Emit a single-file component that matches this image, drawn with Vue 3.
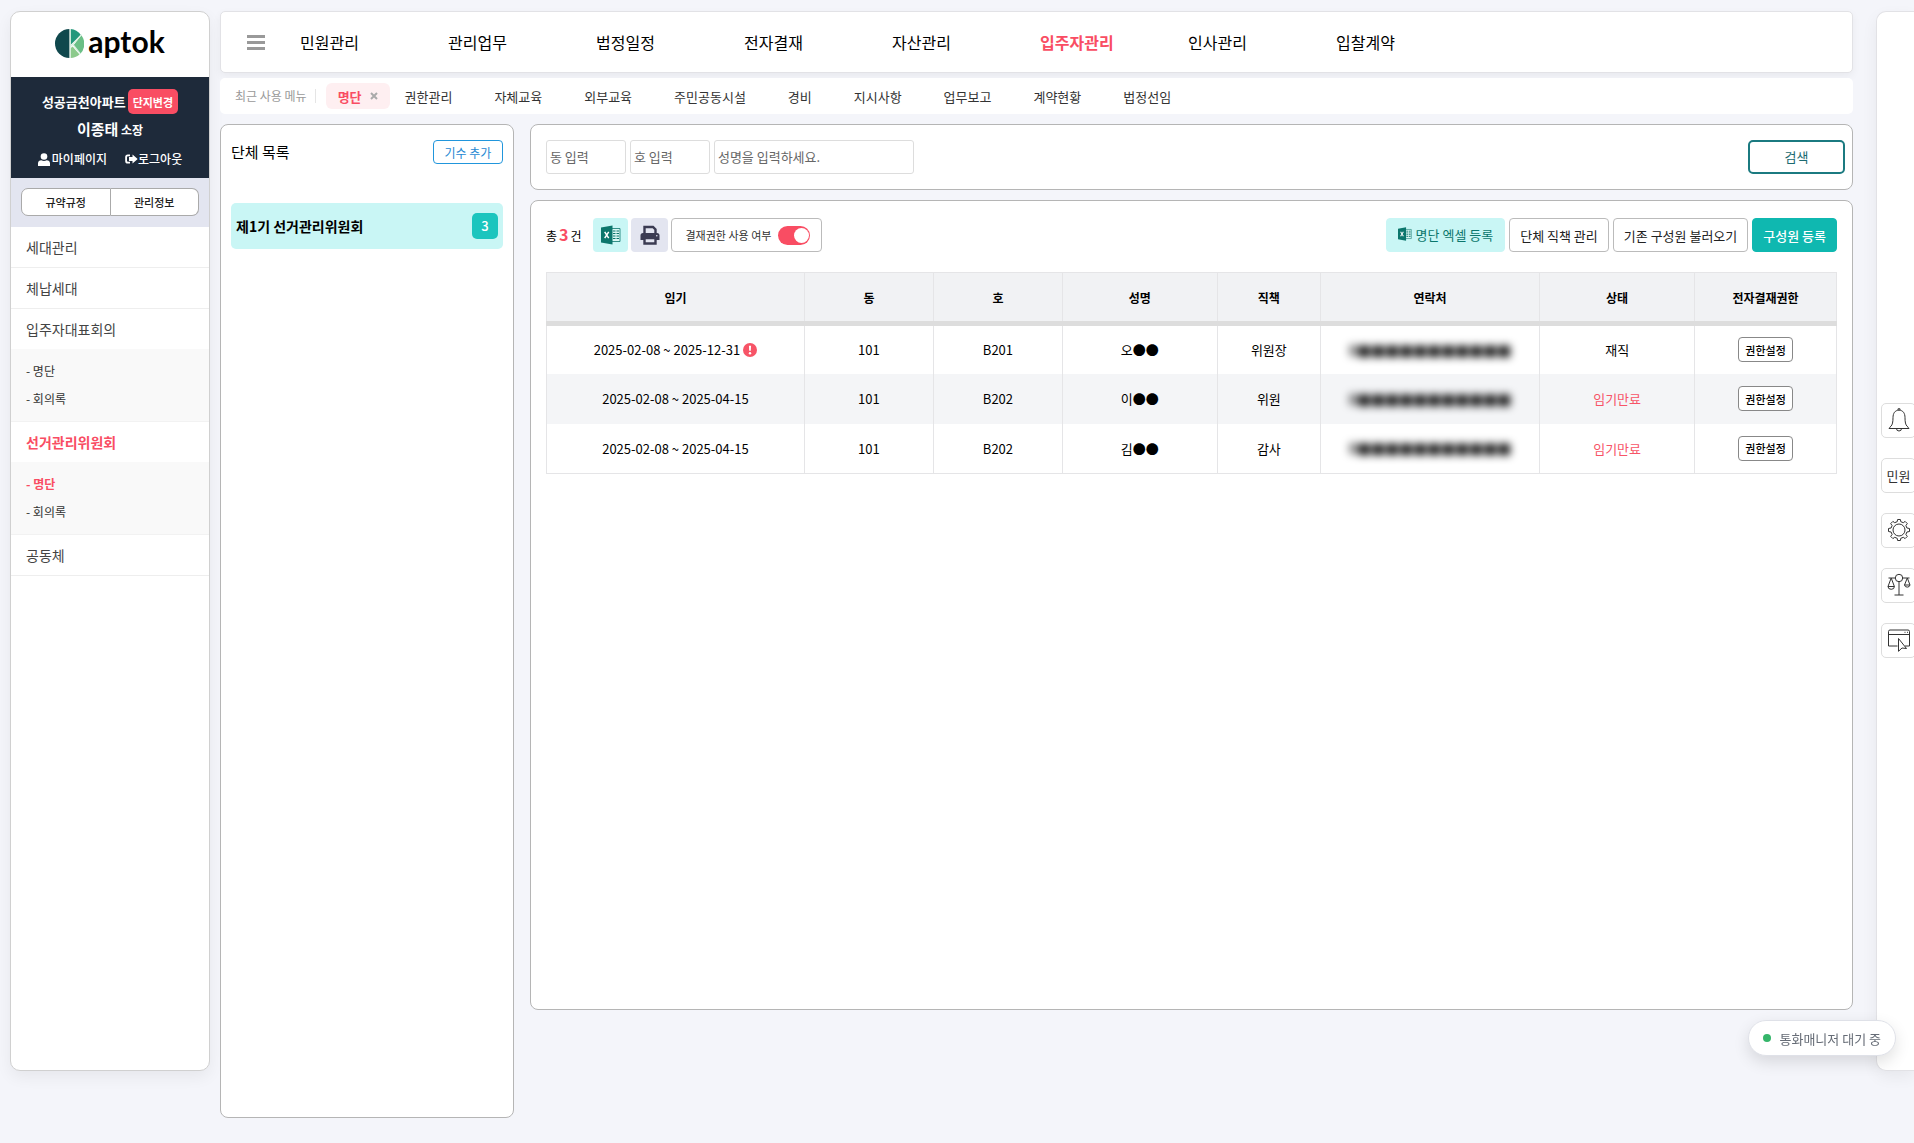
<template>
  <div class="page">
    <aside class="sidebar">
      <a href="#" class="logo">
        <svg class="logo-mark" viewBox="0 0 28 28" aria-hidden="true">
          <path d="M14 0a14 14 0 0 0 0 28z" fill="#10484d" />
          <path d="M15 0a14 14 0 0 1 9.900 5.500L15 15.500z" fill="#24987c" />
          <path d="M25.500 6a14 14 0 0 1-1 18l-6.800-8z" fill="#6abf86" />
          <path d="M17 17l6.700 7.700A14 14 0 0 1 15 28v-9.500z" fill="#8cca8c" />
          <path d="M14.700 0v28M15 17L25.500 5.500M17.500 15l7 9" fill="none" stroke="#d9efe0" stroke-width="1.100" />
        </svg>
        <span class="logo-text">aptok</span>
      </a>

      <div class="profile">
        <div class="profile-apt">
          <strong>성공금천아파트</strong>
          <button type="button" class="change-btn">단지변경</button>
        </div>
        <div class="profile-name"><strong>이종태</strong> <b>소장</b></div>
        <div class="profile-links">
          <a href="#">
            <svg viewBox="0 0 12 13" width="12" height="13" fill="currentColor" aria-hidden="true">
              <circle cx="6" cy="3.500" r="3.300" />
              <path d="M0 13v-2.500C0 8.500 1.500 7.300 3.300 7.300 5 8.200 7 8.200 8.700 7.300c1.800 0 3.300 1.200 3.300 3.200V13z" />
            </svg>
            마이페이지
          </a>
          <a href="#" class="logout">
            <svg viewBox="0 0 13 12" width="13" height="12" fill="currentColor" aria-hidden="true">
              <path d="M5 1.500v1.800H3a1 1 0 0 0-1 1v3.400a1 1 0 0 0 1 1h2v1.800H2.800A2.600 2.600 0 0 1 .2 7.900V4.100a2.600 2.600 0 0 1 2.600-2.600z" />
              <path d="M7.500 1.500L12.700 6l-5.200 4.500V8H4V4h3.500z" />
            </svg>
            로그아웃
          </a>
        </div>
      </div>

      <div class="side-group">
        <button type="button">규약규정</button>
        <button type="button">관리정보</button>
      </div>

      <nav>
        <template v-for="menu in sideMenus" :key="menu.name">
          <a href="#" class="side-item" :class="{ active: menu.active, open: menu.children }">{{ menu.name }}</a>
          <div v-if="menu.children" class="side-sub">
            <a
              v-for="child in menu.children"
              :key="child"
              href="#"
              :class="{ active: menu.active && child === '명단' }"
            >- {{ child }}</a>
          </div>
        </template>
      </nav>
    </aside>

    <div class="main">
      <header class="topbar">
        <button type="button" class="hamburger" aria-label="전체 메뉴"><i></i><i></i><i></i></button>
        <nav class="top-menu">
          <a v-for="name in topMenus" :key="name" href="#" :class="{ active: name === '입주자관리' }">{{ name }}</a>
        </nav>
      </header>

      <div class="recent">
        <span class="recent-label">최근 사용 메뉴</span>
        <div class="recent-active">
          <a href="#">명단</a>
          <button type="button" aria-label="닫기">
            <svg viewBox="0 0 8 8" width="8" height="8" aria-hidden="true">
              <path d="M1 1l6 6M7 1L1 7" stroke="#aaa" stroke-width="2" />
            </svg>
          </button>
        </div>
        <nav class="recent-list">
          <a v-for="name in recentMenus" :key="name" href="#">{{ name }}</a>
        </nav>
      </div>

      <div class="content">
        <section class="panel group-panel">
          <div class="group-head">
            <h2>단체 목록</h2>
            <button type="button" class="add-btn">기수 추가</button>
          </div>
          <a href="#" class="group-item">
            <strong>제1기 선거관리위원회</strong>
            <span class="count">3</span>
          </a>
        </section>

        <div class="right">
          <form class="panel search-panel" @submit.prevent>
            <input v-model="dong" type="text" class="short" placeholder="동 입력" aria-label="동" />
            <input v-model="ho" type="text" class="short" placeholder="호 입력" aria-label="호" />
            <input v-model="name" type="text" class="long" placeholder="성명을 입력하세요." aria-label="성명" />
            <button type="submit" class="search-btn">검색</button>
          </form>

          <section class="panel list-panel">
            <div class="toolbar">
              <p class="total">총<em>3</em>건</p>
              <button type="button" class="icon-btn excel" aria-label="엑셀 다운로드">
                <svg viewBox="0 0 20 20" width="20" height="20" aria-hidden="true">
                  <path d="M11 3.500h8v13h-8" fill="#d9f7f3" stroke="#0b766c" stroke-width=".8" />
                  <path d="M12 6h2.500M12 8.500h2.500M12 11h2.500M12 13.500h2.500M15.500 6H18M15.500 8.500H18M15.500 11H18M15.500 13.500H18" stroke="#0b766c" stroke-width="1.200" />
                  <path d="M0 2.500L11.500.5v19L0 17.500z" fill="#0b766c" />
                  <path d="M3.700 6.800l4 6.400M7.700 6.800l-4 6.400" stroke="#fff" stroke-width="1.500" />
                </svg>
              </button>
              <button type="button" class="icon-btn print" aria-label="인쇄">
                <svg viewBox="0 0 20 20" width="20" height="20" aria-hidden="true">
                  <path d="M4.500 9V2h8.500l2.500 2.500V9" fill="none" stroke="#3b3b52" stroke-width="2.400" />
                  <path d="M3 8h14a2.500 2.500 0 0 1 2.500 2.500V15H.5v-4.500A2.500 2.500 0 0 1 3 8z" fill="#3b3b52" />
                  <path d="M4.500 13h11v5.500h-11z" fill="#e3e5f0" stroke="#3b3b52" stroke-width="2.400" />
                  <circle cx="16.800" cy="10.700" r=".8" fill="#e3e5f0" />
                </svg>
              </button>
              <label class="toggle">
                결재권한 사용 여부
                <input v-model="useApproval" type="checkbox" />
              </label>

              <div class="actions">
                <button type="button" class="act mint">
                  <svg viewBox="0 0 20 20" width="14" height="14" aria-hidden="true">
                    <path d="M11 3.500h8v13h-8" fill="#d9f7f3" stroke="#0b766c" stroke-width=".8" />
                    <path d="M12 6h2.500M12 8.500h2.500M12 11h2.500M12 13.500h2.500M15.500 6H18M15.500 8.500H18M15.500 11H18M15.500 13.500H18" stroke="#0b766c" stroke-width="1.200" />
                    <path d="M0 2.500L11.500.5v19L0 17.500z" fill="#0b766c" />
                    <path d="M3.700 6.800l4 6.400M7.700 6.800l-4 6.400" stroke="#fff" stroke-width="1.500" />
                  </svg>
                  명단 엑셀 등록
                </button>
                <button type="button" class="act">단체 직책 관리</button>
                <button type="button" class="act">기존 구성원 불러오기</button>
                <button type="button" class="act teal">구성원 등록</button>
              </div>
            </div>

            <table>
              <colgroup>
                <col v-for="(w, i) in colWidths" :key="i" :style="{ width: w + '%' }" />
              </colgroup>
              <thead>
                <tr>
                  <th v-for="head in heads" :key="head">{{ head }}</th>
                </tr>
              </thead>
              <tbody>
                <tr v-for="(row, i) in rows" :key="i">
                  <td>
                    <span class="term">
                      {{ row.term }}
                      <svg v-if="row.alert" viewBox="0 0 14 14" width="14" height="14" aria-hidden="true">
                        <circle cx="7" cy="7" r="7" fill="#f75467" />
                        <path d="M5.900 2.800h2.200l-.3 5H6.200z" fill="#fff" />
                        <circle cx="7" cy="10.200" r="1.200" fill="#fff" />
                      </svg>
                    </span>
                  </td>
                  <td>{{ row.dong }}</td>
                  <td>{{ row.ho }}</td>
                  <td>{{ row.name }}</td>
                  <td>{{ row.position }}</td>
                  <td><span class="masked">0■■■■■■■■■■■</span></td>
                  <td :class="{ expired: row.status === '임기만료' }">{{ row.status }}</td>
                  <td><button type="button" class="auth-btn">권한설정</button></td>
                </tr>
              </tbody>
            </table>
          </section>
        </div>
      </div>
    </div>

    <aside class="drawer">
      <button type="button" aria-label="알림">
        <svg viewBox="0 0 24 24" width="24" height="24" aria-hidden="true">
          <path d="M12 2.200c-4 0-6 3-6 7.500 0 4.500-.6 7-2 8.500-.8.800-1.500 1.300-2 2.300h20c-.5-1-1.200-1.500-2-2.300-1.400-1.500-2-4-2-8.500 0-4.500-2-7.500-6-7.500z" />
          <path d="M11 2V.8h2V2M9.500 20.500a2.500 2.500 0 0 0 5 0" />
        </svg>
      </button>
      <button type="button">민원</button>
      <button type="button" aria-label="설정">
        <svg viewBox="0 0 24 24" width="24" height="24" aria-hidden="true">
          <circle cx="12" cy="12" r="6" />
          <path d="M10.200 3.700L10.600 1.500h2.800l.4 2.200 2.500 1 1.800-1.300 2.200 2.200-1.400 1.900 1 2.500 2.600.5v3l-2.600.5-1 2.500 1.400 1.900-2.200 2.200-1.800-1.300-2.500 1-.4 2.200h-2.800l-.4-2.200-2.500-1-1.800 1.300-2.200-2.200 1.400-1.900-1-2.500-2.600-.5v-3l2.600-.5 1-2.500-1.400-1.900 2.200-2.200 1.800 1.300z" />
        </svg>
      </button>
      <button type="button" aria-label="법령">
        <svg viewBox="0 0 24 24" width="24" height="24" aria-hidden="true">
          <circle cx="12" cy="5" r="3.700" />
          <path d="M12 8.700V22M7.500 22h9M1.500 5h6.800M15.700 5h6.800M4.200 5L1 13.500h6.400zM20.300 5l-2.800 7h5.500z" />
          <path d="M1 13.500a3.200 2.800 0 0 0 6.400 0M17.500 12a2.800 2.600 0 0 0 5.500 0" />
        </svg>
      </button>
      <button type="button" aria-label="바로가기">
        <svg viewBox="0 0 24 24" width="24" height="24" aria-hidden="true">
          <path d="M10.500 18h-9V3.500A1.500 1.500 0 0 1 3 2h18a1.500 1.500 0 0 1 1.500 1.500V18H18M1.500 6.500h21M17.500 4.300h1M20 4.300h1" />
          <path d="M11.500 10.500l8 10-4.500-.5-3.500 3.300z" fill="#fff" />
        </svg>
      </button>
    </aside>

    <div class="call-status"><i></i>통화매니저 대기 중</div>
  </div>
</template>

<script setup>
import { ref } from 'vue'

const dong = ref('')
const ho = ref('')
const name = ref('')
const useApproval = ref(true)

const topMenus = ['민원관리', '관리업무', '법정일정', '전자결재', '자산관리', '입주자관리', '인사관리', '입찰계약']

const recentMenus = ['권한관리', '자체교육', '외부교육', '주민공동시설', '경비', '지시사항', '업무보고', '계약현황', '법정선임']

const sideMenus = [
  { name: '세대관리' },
  { name: '체납세대' },
  { name: '입주자대표회의', children: ['명단', '회의록'] },
  { name: '선거관리위원회', children: ['명단', '회의록'], active: true },
  { name: '공동체' },
]

const heads = ['임기', '동', '호', '성명', '직책', '연락처', '상태', '전자결재권한']
const colWidths = [20, 10, 10, 12, 8, 17, 12, 11]

const rows = [
  { term: '2025-02-08 ~ 2025-12-31', alert: true, dong: '101', ho: 'B201', name: '오●●', position: '위원장', status: '재직' },
  { term: '2025-02-08 ~ 2025-04-15', dong: '101', ho: 'B202', name: '이●●', position: '위원', status: '임기만료' },
  { term: '2025-02-08 ~ 2025-04-15', dong: '101', ho: 'B202', name: '김●●', position: '감사', status: '임기만료' },
]
</script>

<style>
body {
  background: #f4f5fa;
}
</style>

<style scoped>
.page {
  display: flex;
  align-items: flex-start;
  min-height: 100vh;
  box-sizing: border-box;
  padding: 11px 0 24px 10px;
  overflow: hidden;
  font-family: 'Noto Sans CJK KR', 'Noto Sans', sans-serif;
  font-size: 13px;
  color: #000;
}

.page * {
  box-sizing: border-box;
}

a {
  color: inherit;
  text-decoration: none;
}

button,
input {
  font: inherit;
  color: inherit;
  margin: 0;
}

button {
  padding: 0;
  cursor: pointer;
  white-space: nowrap;
}

/* sidebar */
.sidebar {
  flex: 0 0 200px;
  height: calc(100vh - 83px);
  min-height: 600px;
  background: #fff;
  border: 1px solid #d0d0d0;
  border-radius: 10px;
  box-shadow: 0 6px 16px rgba(0, 0, 0, 0.06);
  overflow: hidden;
}

.logo {
  display: flex;
  align-items: center;
  justify-content: center;
  gap: 4px;
  height: 65px;
  padding-bottom: 2px;
}

.logo-mark {
  width: 29px;
  height: 29px;
}

.logo-text {
  padding-bottom: 5px;
  font-family: Lato, sans-serif;
  font-size: 30px;
  font-weight: 700;
  line-height: 32px;
}

.profile {
  padding: 12px 0 5px;
  background: #1e2a3a;
  color: #fff;
  text-align: center;
}

.profile-apt {
  display: flex;
  justify-content: center;
  align-items: center;
  gap: 2px;
}

.change-btn {
  height: 25px;
  padding: 0 5px;
  border: 0;
  border-radius: 5px;
  background: #f94d63;
  font-size: 11px;
  font-weight: 700;
}

.profile-name {
  font-size: 12px;
  line-height: 30px;
}

.profile-name strong {
  font-size: 15px;
}

.profile-links {
  display: flex;
  justify-content: center;
  gap: 18px;
  font-size: 12px;
  font-weight: 500;
  line-height: 28px;
}

.profile-links a {
  display: flex;
  align-items: center;
  gap: 2px;
}

.profile-links .logout {
  gap: 0;
}

.side-group {
  display: flex;
  padding: 10px 10px 11px;
  background: #e3e5f0;
}

.side-group button {
  flex: 1;
  height: 28px;
  border: 1px solid #aaa;
  background: #fff;
  color: #222;
  font-size: 11px;
  font-weight: 500;
}

.side-group button:first-child {
  border-radius: 7px 0 0 7px;
}

.side-group button:last-child {
  border-left: 0;
  border-radius: 0 7px 7px 0;
}

.side-item {
  display: block;
  padding-left: 15px;
  border-bottom: 1px solid #eee;
  color: #444;
  font-size: 14px;
  line-height: 40px;
}

.side-item.open {
  border-bottom: 0;
}

.side-sub {
  padding: 8px 0;
  background: #f9f9f9;
  border-bottom: 1px solid #f2f2f2;
}

.side-sub a {
  display: block;
  padding-left: 15px;
  color: #333;
  font-size: 12px;
  line-height: 28px;
}

.sidebar .active {
  color: #f94d63;
  font-weight: 700;
}

/* main */
.main {
  flex: 1;
  min-width: 0;
  margin: 0 23px 0 10px;
}

.topbar {
  display: flex;
  align-items: center;
  height: 62px;
  padding-left: 26px;
  background: #fff;
  border: 1px solid #e2e2e6;
  border-radius: 5px;
  box-shadow: 0 3px 8px rgba(0, 0, 0, 0.05);
}

.hamburger {
  display: flex;
  flex-direction: column;
  gap: 3px;
  width: 18px;
  border: 0;
  background: none;
}

.hamburger i {
  height: 3px;
  background: #999;
}

.top-menu {
  display: flex;
  margin-left: 35px;
}

.top-menu a {
  width: 148px;
  font-size: 16px;
}

.top-menu .active {
  color: #f94d63;
  font-weight: 700;
}

.recent {
  display: flex;
  align-items: center;
  height: 36px;
  margin-top: 5px;
  padding-left: 15px;
  background: #fff;
  border-radius: 5px;
}

.recent-label {
  padding-right: 8px;
  border-right: 1px solid #e5e5e5;
  color: #999;
  font-size: 12px;
  line-height: 14px;
}

.recent-active {
  display: flex;
  align-items: center;
  gap: 8px;
  height: 26px;
  margin: 0 15px 0 10px;
  padding: 0 12px;
  border-radius: 6px;
  background: #feeff1;
  color: #f94d63;
  font-weight: 700;
}

.recent-active button {
  display: flex;
  border: 0;
  background: none;
}

.recent-list {
  display: flex;
  gap: 42px;
  color: #333;
}

.content {
  display: flex;
  align-items: flex-start;
  gap: 16px;
  margin-top: 10px;
}

.panel {
  background: #fff;
  border: 1px solid #b5b5b5;
  border-radius: 8px;
}

.group-panel {
  flex: 0 0 18%;
  height: calc(100vh - 149px);
  min-height: 500px;
  padding: 15px 10px;
}

.group-head {
  display: flex;
  align-items: center;
  justify-content: space-between;
  height: 24px;
}

.group-head h2 {
  margin: 0;
  padding-bottom: 2px;
  font-size: 15px;
  font-weight: 400;
}

.add-btn {
  width: 70px;
  height: 24px;
  border: 1px solid #2196dc;
  border-radius: 4px;
  background: #fff;
  color: #1e88d2;
  font-size: 12px;
}

.group-item {
  display: flex;
  align-items: center;
  justify-content: space-between;
  height: 46px;
  margin-top: 39px;
  padding: 0 5px;
  border-radius: 5px;
  background: #c9f6f5;
  font-size: 14px;
}

.count {
  width: 26px;
  border-radius: 5px;
  background: #1cc5be;
  color: #fff;
  font-size: 13px;
  font-weight: 500;
  line-height: 26px;
  text-align: center;
}

.right {
  flex: 1;
  min-width: 0;
}

.search-panel {
  display: flex;
  gap: 4px;
  padding: 15px 7px 15px 15px;
}

.search-panel input {
  height: 34px;
  padding: 0 3px 2px;
  border: 1px solid #ddd;
  border-radius: 3px;
  background: #fff;
}

.search-panel input::placeholder {
  color: #666;
}

.short {
  width: 80px;
}

.long {
  width: 200px;
}

.search-btn {
  width: 97px;
  height: 34px;
  margin-left: auto;
  padding-bottom: 2px;
  border: 2px solid #1b7a80;
  border-radius: 5px;
  background: #fff;
  color: #1b6a70;
}

.list-panel {
  min-height: calc(100vh - 333px);
  margin-top: 10px;
  padding: 17px 15px;
}

.toolbar {
  display: flex;
  align-items: center;
}

.total {
  margin: 0 12px 0 0;
  padding-bottom: 2px;
  font-size: 12px;
}

.total em {
  margin: 0 2px;
  color: #f94d63;
  font-size: 16px;
  font-style: normal;
  font-weight: 700;
}

.icon-btn {
  display: flex;
  align-items: center;
  justify-content: center;
  height: 34px;
  margin-right: 3px;
  border: 0;
  border-radius: 4px;
}

.excel {
  width: 35px;
  background: #c9f6f5;
}

.print {
  width: 37px;
  background: #e3e5f0;
}

.toggle {
  display: flex;
  align-items: center;
  gap: 7px;
  height: 34px;
  padding: 0 11px 0 13px;
  border: 1px solid #bbb;
  border-radius: 4px;
  color: #333;
  font-size: 11px;
}

.toggle input {
  position: relative;
  width: 32px;
  height: 19px;
  border-radius: 10px;
  background: #ccc;
  appearance: none;
}

.toggle input::after {
  content: '';
  position: absolute;
  top: 2px;
  left: 2px;
  width: 15px;
  height: 15px;
  border-radius: 50%;
  background: #fff;
}

.toggle input:checked {
  background: #f94d63;
}

.toggle input:checked::after {
  left: 16px;
}

.actions {
  display: flex;
  gap: 4px;
  margin-left: auto;
}

.act {
  display: flex;
  align-items: center;
  gap: 4px;
  height: 34px;
  padding: 0 10px;
  border: 1px solid #bbb;
  border-radius: 4px;
  background: #fff;
  color: #222;
}

.act.mint {
  padding: 0 11px 2px;
  border-color: #c9f6f5;
  background: #c9f6f5;
  color: #0b766c;
}

.act.teal {
  border-color: #0fb8b0;
  background: #0fb8b0;
  color: #fff;
  font-weight: 500;
}

/* table */
table {
  width: 100%;
  margin-top: 20px;
  border-collapse: collapse;
  table-layout: fixed;
  text-align: center;
}

th,
td {
  height: 50px;
  padding: 0;
  border: 1px solid #e5e5e7;
}

td {
  border-top: 0;
  border-bottom: 0;
}

th {
  height: 51px;
  border-bottom: 5px solid #ddd;
  background: #f1f2f4;
  font-size: 12px;
  font-weight: 700;
}

tbody tr:nth-child(even) {
  background: #f4f5f7;
}

tbody tr:last-child {
  border-bottom: 1px solid #e5e5e7;
}

.term {
  display: inline-flex;
  align-items: center;
  gap: 3px;
}

.masked {
  font-size: 14px;
  font-weight: 700;
  filter: blur(4px);
}

.expired {
  color: #f75467;
}

.auth-btn {
  width: 55px;
  height: 25px;
  border: 1px solid #888;
  border-radius: 4px;
  background: #fff;
  font-size: 11px;
  font-weight: 500;
}

/* right drawer */
.drawer {
  display: flex;
  flex-direction: column;
  align-items: flex-start;
  justify-content: center;
  gap: 20px;
  flex: 0 0 38px;
  height: calc(100vh - 83px);
  min-height: 600px;
  padding: 0 0 22px 4px;
  background: #fff;
  border: 1px solid #e2e2e6;
  border-right: 0;
  border-radius: 10px 0 0 10px;
  box-shadow: 0 6px 16px rgba(0, 0, 0, 0.06);
  overflow: hidden;
}

.drawer button {
  display: flex;
  align-items: center;
  justify-content: center;
  flex: 0 0 35px;
  width: 35px;
  border: 1px solid #ddd;
  border-radius: 5px;
  background: #fff;
  color: #333;
}

.drawer svg {
  flex: none;
  fill: none;
  stroke: #333;
  stroke-width: 1;
}

.call-status {
  position: fixed;
  right: 18px;
  bottom: 87px;
  display: flex;
  align-items: center;
  gap: 8px;
  height: 36px;
  padding: 0 14px;
  border: 1px solid #dfe1e8;
  border-radius: 18px;
  background: #fff;
  box-shadow: 0 6px 16px rgba(0, 0, 0, 0.12);
  color: #666c76;
}

.call-status i {
  width: 8px;
  height: 8px;
  border-radius: 50%;
  background: #35b56a;
}
</style>
